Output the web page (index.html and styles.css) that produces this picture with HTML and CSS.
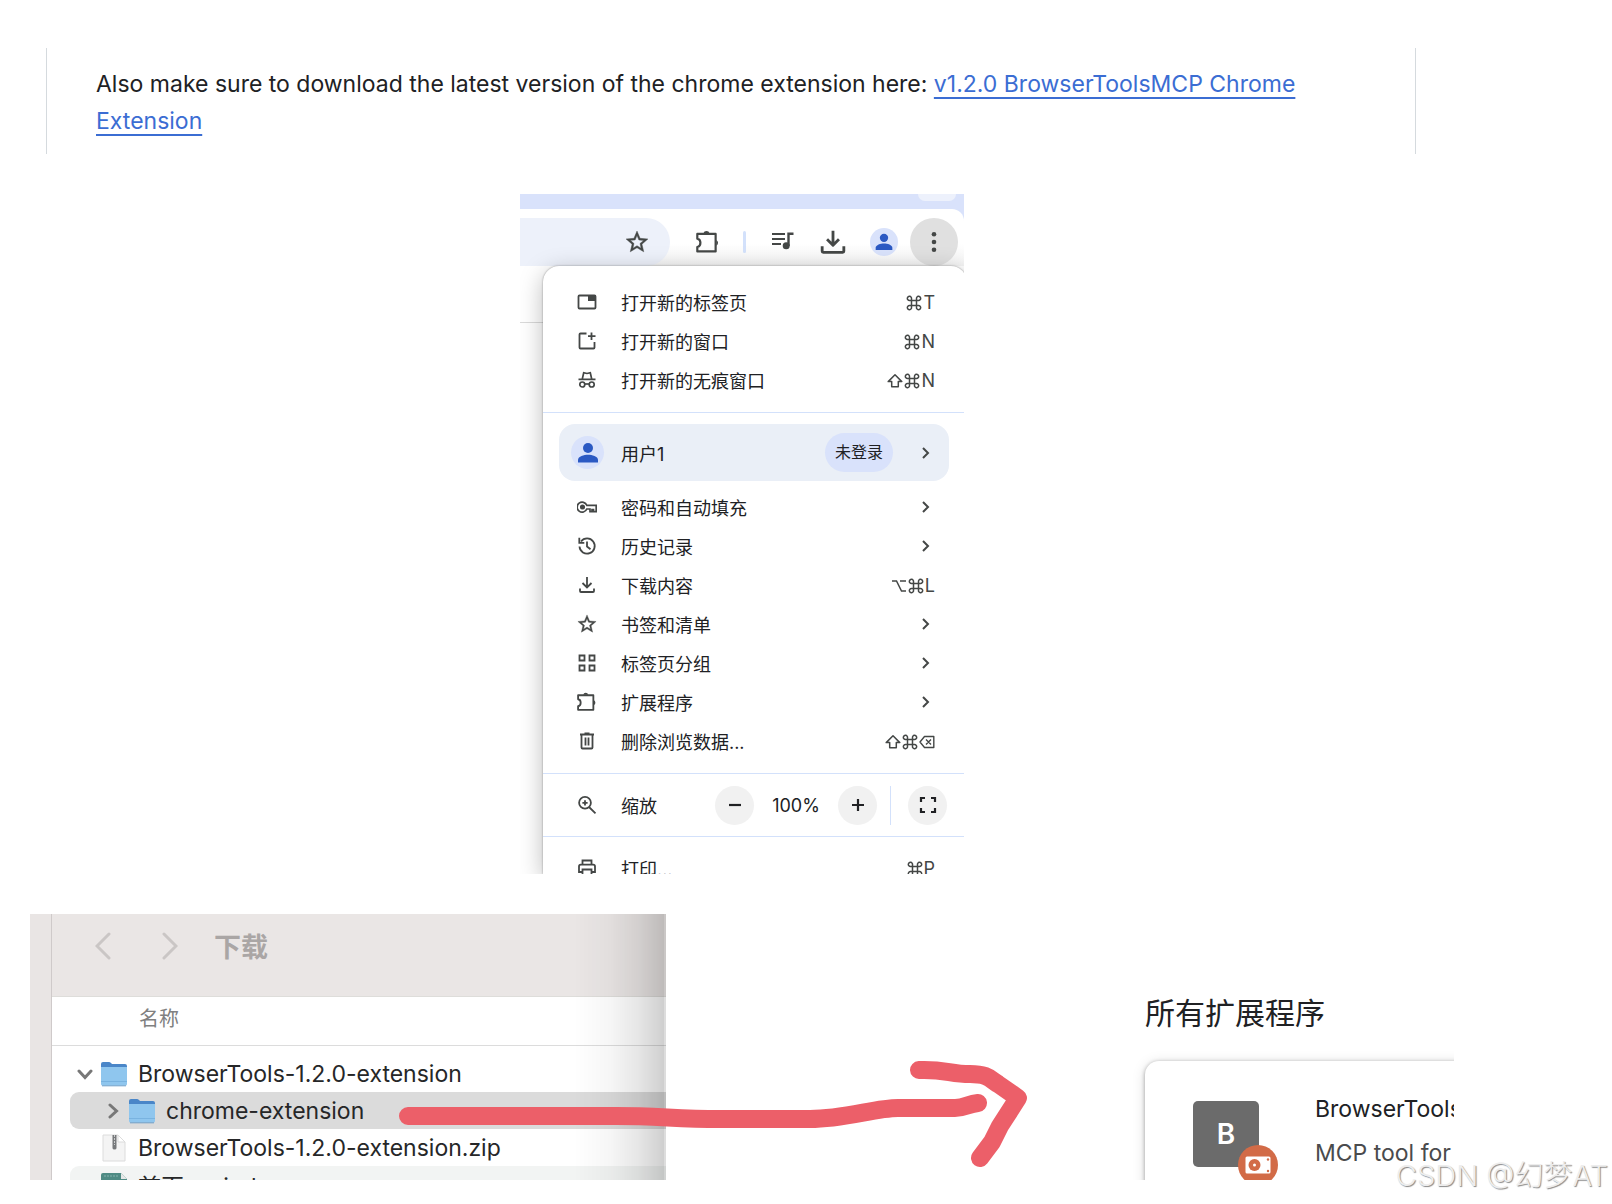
FILE: index.html
```
<!DOCTYPE html>
<html lang="zh-CN">
<head>
<meta charset="utf-8">
<title>BrowserTools MCP</title>
<link rel="stylesheet" href="styles.css">
</head>
<body>
<svg class="defs" aria-hidden="true">
  <symbol id="puzzle" viewBox="2 1 22 22"><path d="M3.2 4.6H20V20.6H3.2V16.6C7 16 7 9.6 3.2 9Z" fill="none" stroke="currentColor" stroke-width="2" stroke-linejoin="round"/><path d="M8.800 4a2.900 2.900 0 0 1 5.600 0zM20.600 10.200a2.900 2.900 0 0 1 0 5.200z" fill="currentColor"/></symbol>
  <symbol id="star" viewBox="1 1 22 22"><path d="M22 9.24l-7.19-.62L12 2 9.19 8.63 2 9.24l5.46 4.73L5.82 21 12 17.27 18.18 21l-1.63-7.03L22 9.24zM12 15.4l-3.76 2.27 1-4.28-3.32-2.88 4.38-.38L12 6.1l1.71 4.04 4.38.38-3.32 2.88 1 4.28L12 15.4z" fill="currentColor" stroke="currentColor" stroke-width=".4"/></symbol>
  <symbol id="person" viewBox="0 0 24 24"><circle cx="12" cy="7" r="5" fill="currentColor"/><path d="M2 21.5v-2.6c0-3.6 6-5.2 10-5.2s10 1.600 10 5.200v2.600z" fill="currentColor"/></symbol>
  <symbol id="download" viewBox="0 0 24 24"><path d="M12 1.500v13M6.500 9.500l5.500 5.500 5.500-5.500M2 16v4.500q0 1 1 1h18q1 0 1-1V16" fill="none" stroke="currentColor" stroke-width="2.600" stroke-linejoin="round"/></symbol>
  <symbol id="chevron" viewBox="0 0 12 16"><path d="M3 3l5 5-5 5" fill="none" stroke="currentColor" stroke-width="2"/></symbol>
  <symbol id="cmd" viewBox="0 0 16 16"><path d="M5.500 5.500h5v5h-5zM5.500 5.500V3.700A2.100 2.100 0 1 0 3.400 5.500zM10.500 5.500V3.700A2.100 2.100 0 1 1 12.600 5.500zM5.500 10.500v1.800A2.100 2.100 0 1 1 3.400 10.500zM10.500 10.500v1.800A2.100 2.100 0 1 0 12.600 10.500z" fill="none" stroke="currentColor" stroke-width="1.500"/></symbol>
  <symbol id="shift" viewBox="0 0 16 16"><path d="M8 1.800L1.200 8.600H4.700V13.800H11.300V8.600H14.800Z" fill="none" stroke="currentColor" stroke-width="1.500" stroke-linejoin="round"/></symbol>
  <symbol id="folder" viewBox="0 0 28 26"><path d="M1 3q0-2 2-2h6q1 0 2 1l1 1h13q2 0 2 2v8H1z" fill="#4a86c8"/><path d="M1 6h26v17q0 1.500-1.500 1.500h-23Q1 24.500 1 23z" fill="#8fc6ee"/><path d="M1 20.500h26" stroke="#79b3e0"/><path d="M2 24.800h24" stroke="#6d9fc8"/></symbol>
</svg>

<main class="page">
  <section class="note">
    <p>Also make sure to download the latest version of the chrome extension here: <a href="#ext">v1.2.0 BrowserToolsMCP Chrome Extension</a></p>
  </section>

  <section class="browser">
    <div class="tabstrip"><span class="tab-button"></span></div>
    <div class="toolbar">
      <div class="omnibox"><button aria-label="收藏"><svg class="i24"><use href="#star"/></svg></button></div>
      <button aria-label="扩展程序"><svg class="i24"><use href="#puzzle"/></svg></button>
      <span class="bar-divider"></span>
      <button aria-label="媒体"><svg class="i26" viewBox="0 0 26 26"><path d="M2 5h13M2 10h13M2 15h9" fill="none" stroke="currentColor" stroke-width="2.200"/><path d="M18.500 17V4.700H23.500" fill="none" stroke="currentColor" stroke-width="2.400"/><circle cx="16.200" cy="16.800" r="3.500" fill="currentColor"/></svg></button>
      <button aria-label="下载"><svg class="i26"><use href="#download"/></svg></button>
      <button class="avatar small" aria-label="用户"><svg class="i20"><use href="#person"/></svg></button>
      <button class="kebab" aria-label="菜单"><svg class="i26" viewBox="0 0 26 26" fill="currentColor"><circle cx="13" cy="5.200" r="2.300"/><circle cx="13" cy="13" r="2.300"/><circle cx="13" cy="20.800" r="2.300"/></svg></button>
    </div>
    <div class="content">
      <div class="page-edge"></div>
      <nav class="menu">
        <ul>
          <li><svg class="i20" viewBox="0 0 20 20"><rect x="1.500" y="3.500" width="17" height="13" rx="1" fill="none" stroke="currentColor" stroke-width="1.800"/><path d="M11 3.500h7.500V9H11z" fill="currentColor"/></svg><span>打开新的标签页</span><kbd><svg><use href="#cmd"/></svg>T</kbd></li>
          <li><svg class="i20" viewBox="0 0 20 20" fill="none" stroke="currentColor" stroke-width="1.800"><path d="M9.500 2.500H3.500q-1 0-1 1V16.500q0 1 1 1H16.500q1 0 1-1V11"/><path d="M14.500 1.500v7.500M11 5.200h7.500"/></svg><span>打开新的窗口</span><kbd><svg><use href="#cmd"/></svg>N</kbd></li>
          <li><svg class="i20" viewBox="0 0 20 20" fill="none" stroke="currentColor" stroke-width="1.700"><path d="M1.500 9.300h17M5.300 9l1.400-6.300 3.300.8 3.300-.8L14.700 9"/><circle cx="5.300" cy="14.500" r="2.500"/><circle cx="14.700" cy="14.500" r="2.500"/><path d="M7.500 14h5"/></svg><span>打开新的无痕窗口</span><kbd><svg><use href="#shift"/></svg><svg><use href="#cmd"/></svg>N</kbd></li>
        </ul>
        <hr>
        <div class="profile">
          <span class="avatar"><svg class="i24"><use href="#person"/></svg></span><span>用户1</span><em>未登录</em><svg class="chev"><use href="#chevron"/></svg>
        </div>
        <ul>
          <li><svg class="i20" viewBox="0 0 20 20" fill="none" stroke="currentColor" stroke-width="1.700"><path d="M9.800 8.300A5 5 0 1 0 9.800 12H13v2.600h2V12.500h1.500v2.100h2.700V8.300z"/><circle cx="5.500" cy="10" r="1.700" fill="currentColor"/></svg><span>密码和自动填充</span><svg class="chev"><use href="#chevron"/></svg></li>
          <li><svg class="i20" viewBox="0 0 20 20" fill="none" stroke="currentColor" stroke-width="1.800"><path d="M2.500 10.500A7.600 7.600 0 1 0 4 5.500"/><path d="M2.300 1.800V6.800H7.300M10 5.500V10.500l3.500 2.800"/></svg><span>历史记录</span><svg class="chev"><use href="#chevron"/></svg></li>
          <li><svg class="i20" viewBox="0 0 20 20" fill="none" stroke="currentColor" stroke-width="1.800"><path d="M10 2v10.500M5.500 8l4.500 4.500L14.500 8M3 13.500V16q0 1 1 1H16q1 0 1-1V13.500"/></svg><span>下载内容</span><kbd><svg viewBox="0 0 16 16"><path d="M1 3h4.500l5 10H15M9 3h6" fill="none" stroke="currentColor" stroke-width="1.500"/></svg><svg><use href="#cmd"/></svg>L</kbd></li>
          <li><svg class="i20"><use href="#star"/></svg><span>书签和清单</span><svg class="chev"><use href="#chevron"/></svg></li>
          <li><svg class="i20" viewBox="0 0 20 20" fill="none" stroke="currentColor" stroke-width="1.800"><path d="M2.500 2.500h5v5h-5zM12.500 2.500h5v5h-5zM2.500 12.500h5v5h-5zM12.500 12.500h5v5h-5z"/></svg><span>标签页分组</span><svg class="chev"><use href="#chevron"/></svg></li>
          <li><svg class="i20"><use href="#puzzle"/></svg><span>扩展程序</span><svg class="chev"><use href="#chevron"/></svg></li>
          <li><svg class="i20" viewBox="0 0 20 20" fill="none" stroke="currentColor" stroke-width="1.800"><path d="M3 3.500h14M7.500 2.500h5M4.500 3.500V16.500q0 1 1 1h9q1 0 1-1V3.500"/><path d="M8.500 6.500v8M11.500 6.500v8"/></svg><span>删除浏览数据...</span><kbd><svg><use href="#shift"/></svg><svg><use href="#cmd"/></svg><svg viewBox="0 0 16 16"><path d="M5.500 2.500h9.300v11H5.500L1 8zM7 5.500l5 5M12 5.500l-5 5" fill="none" stroke="currentColor" stroke-width="1.400" stroke-linejoin="round"/></svg></kbd></li>
        </ul>
        <hr>
        <div class="zoom">
          <svg class="i20" viewBox="0 0 20 20" fill="none" stroke="currentColor" stroke-width="1.800"><circle cx="8" cy="7.800" r="5.900"/><path d="M12 12l6.500 6.300M5.400 7.800h5.200M8 5.200v5.200"/></svg>
          <span>缩放</span>
          <button aria-label="缩小"><svg class="i20" viewBox="0 0 20 20"><path d="M4 10h12" stroke="currentColor" stroke-width="2.200"/></svg></button>
          <output>100%</output>
          <button aria-label="放大"><svg class="i20" viewBox="0 0 20 20"><path d="M4 10h12M10 4v12" stroke="currentColor" stroke-width="2.200"/></svg></button>
          <i></i>
          <button aria-label="全屏"><svg class="i20" viewBox="0 0 20 20"><path d="M3 7V3h4M13 3h4v4M17 13v4h-4M7 17H3v-4" fill="none" stroke="currentColor" stroke-width="2.200"/></svg></button>
        </div>
        <hr>
        <ul>
          <li><svg class="i20" viewBox="0 0 20 20" fill="none" stroke="currentColor" stroke-width="1.800"><path d="M5.500 6.500V2.500h9v4M5.500 14H2V8.500q0-1.800 1.800-1.800H16.200q1.800 0 1.800 1.800V14h-3.500M5.500 11.500h9v6h-9z"/></svg><span>打印...</span><kbd><svg><use href="#cmd"/></svg>P</kbd></li>
        </ul>
      </nav>
    </div>
  </section>

  <div class="bottom">
    <section class="finder">
      <div class="sidebar"></div>
      <div class="files">
        <header>
          <button aria-label="后退"><svg viewBox="0 0 16 28"><path d="M14 2L2 14l12 12"/></svg></button>
          <button aria-label="前进"><svg viewBox="0 0 16 28"><path d="M2 2l12 12L2 26"/></svg></button>
          <h2>下载</h2>
        </header>
        <div class="column">名称</div>
        <ul>
          <li><svg class="tri" viewBox="0 0 16 16"><path d="M2 5l6 6.500L14 5"/></svg><svg class="file"><use href="#folder"/></svg><span>BrowserTools-1.2.0-extension</span></li>
          <li class="child selected"><svg class="tri" viewBox="0 0 16 16"><path d="M5 2l6.500 6L5 14"/></svg><svg class="file"><use href="#folder"/></svg><span>chrome-extension</span></li>
          <li><span class="tri"></span><svg class="file" viewBox="0 0 28 28"><path d="M3 1h15l7 7v19H3z" fill="#f4f4f4" stroke="#dcdcdc"/><path d="M18 1v7h7z" fill="#fff" stroke="#dcdcdc"/><path d="M12.500 1h4v13q0 1.500-2 1.500t-2-1.500z" fill="#77797b"/><path d="M14.500 1v10" stroke="#c9cbcc" stroke-dasharray="2 1"/></svg><span>BrowserTools-1.2.0-extension.zip</span></li>
          <li class="striped"><span class="tri"></span><svg class="file" viewBox="0 0 28 28"><path d="M1 4q0-2 2-2h18l6 6v19H1z" fill="#4f8b84"/><path d="M21 2v6h6z" fill="#e6e8e7"/><path d="M4 5h14" stroke="#85b3ad" stroke-dasharray="2 1"/></svg><span>首页.xmind</span></li>
        </ul>
      </div>
    </section>

    <section class="extensions">
      <h1>所有扩展程序</h1>
      <article>
        <div class="logo">B
          <svg class="badge" viewBox="0 0 40 40"><circle cx="20" cy="20" r="20" fill="#d26b47"/><rect x="7.500" y="11.500" width="25" height="17" rx="1.500" fill="#fff"/><circle cx="16.500" cy="20" r="6" fill="#d26b47"/><circle cx="16.500" cy="20" r="1.500" fill="#fff"/><circle cx="30" cy="14.500" r="1.200" fill="#d26b47"/><circle cx="30" cy="26" r="1.200" fill="#d26b47"/></svg>
        </div>
        <div class="info"><h3>BrowserTools</h3><p>MCP tool for</p></div>
      </article>
    </section>

    <svg class="arrow" viewBox="0 0 640 120" aria-hidden="true"><path d="M18 66H226C270 66 285 69 330 69H420C455 69 485 58 508 58H565C575 58 578 54 588 53"/><path d="M529 20C555 19 560 24 580 24C598 24 600 29 608 34L628 48L610 76L602 92L590 108"/></svg>
    <span class="watermark">CSDN @幻梦AT</span>
  </div>
</main>
</body>
</html>
```
FILE: styles.css
```
* { box-sizing: border-box; }

body {
  margin: 0;
  background: #fff;
  color: #202124;
  font-family: Inter, "Noto Sans CJK SC", sans-serif;
}

ul, h1, h2, h3, p { margin: 0; padding: 0; list-style: none; font-size: inherit; font-weight: 400; }
button { display: flex; align-items: center; justify-content: center; padding: 0; border: 0; background: none; color: inherit; }
.defs { display: none; }
svg { display: block; flex: none; }
.i20 { width: 20px; height: 20px; }
.i24 { width: 24px; height: 24px; }
.i26 { width: 26px; height: 26px; }

.page { display: flex; flex-direction: column; padding-top: 48px; overflow: hidden; }

/* Release note */
.note {
  width: 85%;
  margin-left: 46px;
  padding: 18px 92px 14px 49px;
  border: solid #d5dade;
  border-width: 0 1px;
  font-size: 23px;
  line-height: 37px;
}
.note a { color: #3b6dd3; text-decoration-thickness: 2px; text-underline-offset: 5px; }

/* Browser window with its menu open */
.browser {
  width: 444px;
  height: 680px;
  margin: 40px 0 0 520px;
  overflow: hidden;
  color: #444746;
  background: #d9e2fb;
}
.tabstrip { display: flex; justify-content: flex-end; height: 15px; padding-right: 8px; }
.tab-button { width: 38px; height: 7px; border-radius: 0 0 16px 16px; background: #edf1fc; }
.toolbar {
  display: flex;
  align-items: center;
  height: 57px;
  padding: 9px 6px 0 0;
  border-top-right-radius: 12px;
  background: linear-gradient(#fff 60%, #f4f4f4);
}
.omnibox {
  display: flex;
  justify-content: flex-end;
  align-items: center;
  width: 150px;
  height: 48px;
  margin-right: 26px;
  padding-right: 21px;
  border-radius: 0 24px 24px 0;
  background: #edf1fa;
}
.bar-divider { width: 3px; height: 22px; margin: 0 24px 0 23px; border-radius: 2px; background: #d3e1fb; }
.toolbar button + button { margin-left: 24px; }
.avatar { display: flex; align-items: center; justify-content: center; width: 33px; height: 33px; border-radius: 50%; background: #d9e2fb; color: #2b59c3; }
.avatar.small { width: 28px; height: 28px; }
.toolbar .kebab { width: 48px; height: 48px; margin-left: 12px; border-radius: 50%; background: #e0e0e0; }
.content { display: flex; height: 608px; background: #fff; }
.page-edge { flex: none; width: 23px; height: 57px; border-bottom: 1px solid #dadada; }
.menu {
  flex: none;
  width: 424px;
  padding-top: 16px;
  border-radius: 16px 16px 0 0;
  background: #fff;
  box-shadow: 0 0 2px #0006, 0 6px 24px #0004;
}
.menu hr { height: 1px; margin: 13px 0 11px; border: 0; background: #d3e1fb; }
.menu li, .profile, .zoom { display: flex; align-items: center; font-size: 18px; color: #202124; }
.menu li { height: 39px; padding: 0 32px 0 34px; }
.menu svg { color: #444746; }
.menu li span { flex: 1; margin-left: 24px; }
.chev { width: 12px; height: 16px; margin-right: 3px; }
kbd { display: flex; align-items: center; gap: 1px; padding-top: 2px; font: 18px Inter, sans-serif; color: #444746; }
kbd svg { width: 16px; height: 16px; }
.profile { height: 57px; margin: 0 18px 6px 16px; padding: 0 14px 0 12px; border-radius: 16px; background: #eaeff7; }
.profile .avatar { margin-right: 17px; }
.menu .avatar svg { color: #2b59c3; }
.profile em { margin-left: auto; margin-right: 27px; padding: 0 10px; border-radius: 20px; background: #d9e2fb; font-size: 16px; font-style: normal; line-height: 39px; }
.zoom { margin: -11px 0 -13px; height: 62px; padding-left: 34px; }
.zoom span { width: 118px; padding-left: 24px; }
.zoom button { width: 39px; height: 39px; border-radius: 50%; background: #f1f1f1; }
.zoom button svg { color: #202124; }
.zoom output { width: 84px; text-align: center; }
.zoom i { width: 1px; height: 39px; margin: 0 17px 0 13px; background: #d3e1fb; }

/* Finder window, arrow and extension card */
.bottom { position: relative; display: flex; align-items: flex-start; min-height: 330px; padding: 40px 0 0 30px; }
.finder { position: relative; display: flex; width: 636px; height: 266px; overflow: hidden; background: #fff; }
.finder::after {
  content: "";
  position: absolute;
  inset: 0 0 0 auto;
  width: 90px;
  border-right: 2px solid #0002;
  background: linear-gradient(90deg, #0000, #00000009 40%, #00000018 70%, #00000030);
}
.sidebar { width: 22px; border-right: 1px solid #cfcaca; background: #e9e5e4; }
.files { flex: 1; }
.files header { display: flex; align-items: center; height: 83px; padding: 0 0 18px 43px; border-bottom: 1px solid #deddda; background: #eae6e5; }
.files header button { margin-right: 51px; }
.files header button + button { margin-right: 36px; }
.files header svg { width: 16px; height: 28px; fill: none; stroke: #cac6c5; stroke-width: 3; stroke-linecap: round; }
.files h2 { padding-top: 3px; font-size: 27px; font-weight: 700; line-height: 40px; color: #aaa6a5; }
.column { height: 49px; padding-left: 87px; border-bottom: 1px solid #dcdcdc; font-size: 20px; line-height: 45px; color: #808080; }
.files ul { padding: 9px 0 0 18px; }
.files li { display: flex; align-items: center; height: 37px; padding-left: 7px; border-radius: 9px 0 0 9px; font-size: 23px; color: #262728; white-space: nowrap; }
.files .child { padding-left: 35px; }
.selected { background: #dbdbdb; }
.files .striped { background: #f2f4f3; }
.tri { width: 16px; height: 16px; margin-right: 7px; fill: none; stroke: #777; stroke-width: 3; stroke-linecap: round; }
.file { width: 28px; height: 28px; margin-right: 10px; }

.extensions { width: 324px; height: 210px; margin: 56px 0 0 464px; padding: 20px 0 0 15px; overflow: hidden; }
.extensions h1 { font-size: 30px; line-height: 46px; }
.extensions article { display: flex; height: 160px; width: 400px; margin-top: 25px; padding: 40px 0 0 48px; border-radius: 14px; background: #fff; box-shadow: 0 1px 4px #0005, 0 2px 14px #0002; }
.logo { flex: none; position: relative; width: 66px; height: 66px; border-radius: 5px; background: #6b6b6b; color: #fff; font-size: 28px; font-weight: 600; line-height: 66px; text-align: center; }
.badge { position: absolute; right: -19px; bottom: -18px; width: 40px; height: 40px; }
.info { margin: -14px 0 0 56px; font-size: 23px; line-height: 44px; white-space: nowrap; }
.info p { color: #4a4b4d; }

.arrow { position: absolute; left: 390px; top: 176px; width: 640px; height: 120px; fill: none; stroke: #ec5f69; stroke-width: 18; stroke-linecap: round; stroke-linejoin: round; }
.watermark { position: absolute; right: 4px; bottom: 6px; color: #ededed; font-size: 29px; font-weight: 300; line-height: 44px; white-space: nowrap; text-shadow: 1px 1px 1px #888; }
```
